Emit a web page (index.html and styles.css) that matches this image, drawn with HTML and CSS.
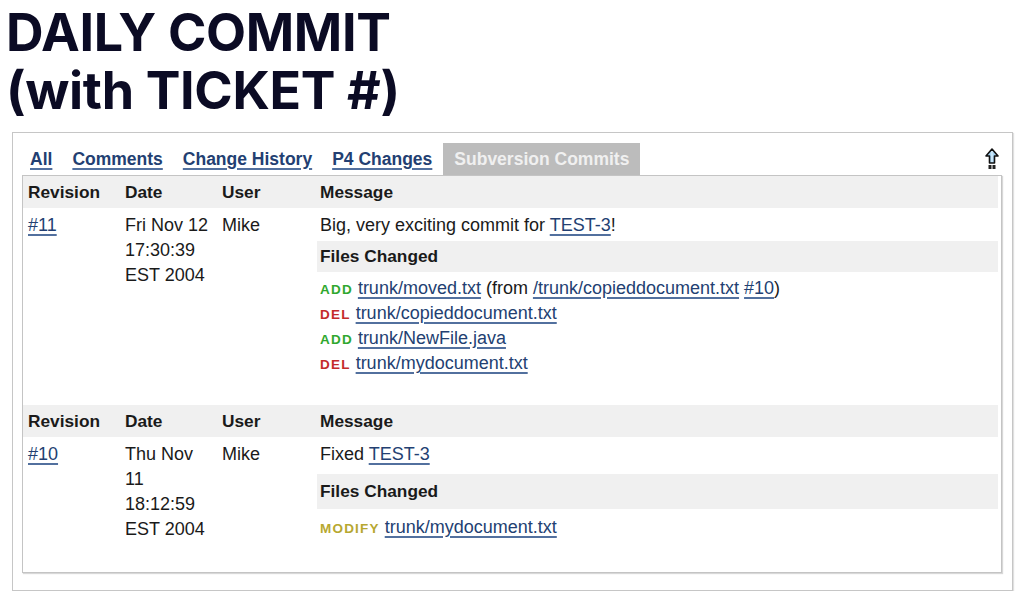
FILE: index.html
```html
<!DOCTYPE html>
<html>
<head>
<meta charset="utf-8">
<link rel="stylesheet" href="styles.css">
</head>
<body>
<h1 class="title">DAILY COMMIT<br>(with TICKET #)</h1>
<div class="panel">
  <div class="tabs">
    <a class="tab" href="#">All</a>
    <a class="tab" href="#">Comments</a>
    <a class="tab" href="#">Change History</a>
    <a class="tab" href="#">P4 Changes</a>
    <span class="tab tab-active">Subversion Commits</span>
    <a class="top-icon" href="#" title="Top">
      <svg width="14" height="22" viewBox="0 0 14 22">
        <path d="M7 1 L13 8 L9.5 8 L9.5 15 L4.5 15 L4.5 8 L1 8 Z" fill="#a9d5f2" stroke="#111" stroke-width="1.6" stroke-linejoin="round"/>
        <path d="M7 3 L7 14" stroke="#e8f6ff" stroke-width="1"/>
        <rect x="3.5" y="17" width="3" height="4" fill="#222"/>
        <rect x="7.5" y="17" width="3" height="4" fill="#222"/>
      </svg>
    </a>
  </div>
  <div class="commits">
    <div class="commit">
      <div class="head">
        <div class="cell">Revision</div>
        <div class="cell">Date</div>
        <div class="cell">User</div>
        <div class="cell">Message</div>
      </div>
      <div class="body">
        <div class="cell"><a href="#">#11</a></div>
        <div class="cell date">Fri Nov 12 17:30:39 EST 2004</div>
        <div class="cell">Mike</div>
        <div class="cell msg">
          <div>Big, very exciting commit for <a href="#">TEST-3</a>!</div>
          <div class="files-head">Files Changed</div>
          <ul class="files">
            <li><span class="act act-add">ADD</span> <a href="#">trunk/moved.txt</a> (from <a href="#">/trunk/copieddocument.txt</a> <a href="#">#10</a>)</li>
            <li><span class="act act-del">DEL</span> <a href="#">trunk/copieddocument.txt</a></li>
            <li><span class="act act-add">ADD</span> <a href="#">trunk/NewFile.java</a></li>
            <li><span class="act act-del">DEL</span> <a href="#">trunk/mydocument.txt</a></li>
          </ul>
        </div>
      </div>
    </div>
    <div class="commit">
      <div class="head">
        <div class="cell">Revision</div>
        <div class="cell">Date</div>
        <div class="cell">User</div>
        <div class="cell">Message</div>
      </div>
      <div class="body">
        <div class="cell"><a href="#">#10</a></div>
        <div class="cell date">Thu Nov 11 18:12:59 EST 2004</div>
        <div class="cell">Mike</div>
        <div class="cell msg">
          <div>Fixed <a href="#">TEST-3</a></div>
          <div class="files-head">Files Changed</div>
          <ul class="files">
            <li><span class="act act-mod">MODIFY</span> <a href="#">trunk/mydocument.txt</a></li>
          </ul>
        </div>
      </div>
    </div>
  </div>
</div>
</body>
</html>
```

FILE: styles.css
```css
html, body {
  margin: 0;
  padding: 0;
  background: #ffffff;
}

body {
  font-family: "Liberation Sans", Arial, sans-serif;
  color: #1a1a1a;
}

.title {
  margin: 4px 0 0 0;
  padding-left: 6px;
  font-family: Inter, "Liberation Sans", sans-serif;
  font-weight: 700;
  font-size: 52px;
  line-height: 58px;
  letter-spacing: -0.35px;
  color: #0b0b24;
}

.panel {
  margin: 12px 0 0 12px;
  border: 1px solid #c6c6c6;
  box-shadow: 1px 1px 1px #e0e0e0;
  padding: 10px 10px 0 7px;
  box-sizing: border-box;
  height: 459px;
  width: 1001px;
}

a {
  color: #233f72;
  text-decoration: underline;
  text-decoration-color: #52709e;
  text-decoration-thickness: 2px;
  text-underline-offset: 3px;
}

.tabs {
  display: flex;
  align-items: center;
  height: 32px;
}

.tab {
  display: flex;
  align-items: center;
  height: 32px;
  padding: 0 10px;
  font-size: 17.5px;
  font-weight: 700;
}

.tab-active {
  margin-left: 1px;
  padding: 0 11px;
  background: #bcbcbc;
  color: #f0f0f0;
}

.top-icon {
  margin-left: auto;
  margin-right: 3px;
  display: flex;
  text-decoration: none;
}

.commits {
  margin-left: 2px;
  border: 1px solid #c4c4c4;
  box-shadow: 1px 1px 1px #d8d8d8;
  padding: 0 3px 0 0;
  height: 398px;
  box-sizing: border-box;
}

.head, .body {
  display: grid;
  grid-template-columns: 97px 97px 98px 1fr;
}

.head {
  background: #f0f0f0;
  font-weight: 700;
  font-size: 17.3px;
  line-height: 32px;
  color: #1a1a1a;
}

.body {
  padding: 5px 0 29px 0;
  font-size: 18px;
  line-height: 25px;
}

.cell {
  padding: 0 4px 0 5px;
}

.cell.msg {
  padding-right: 0;
}

.files-head {
  margin: 3px 0 0 -3px;
  padding-left: 3px;
  background: #f0f0f0;
  font-weight: 700;
  font-size: 17.3px;
  line-height: 31px;
}

.files {
  list-style: none;
  margin: 4px 0 0 0;
  padding: 0;
}

.files li {
  height: 25px;
}

.commit:last-child .files-head {
  margin-top: 7px;
  line-height: 35px;
}

.commit:last-child .files {
  margin-top: 6px;
}

.act {
  font-size: 13.5px;
  line-height: 1;
  font-weight: 700;
  letter-spacing: 1.2px;
}

.act-add { color: #2fa82f; }
.act-del { color: #c42a2a; }
.act-mod { color: #b7a830; }
```
